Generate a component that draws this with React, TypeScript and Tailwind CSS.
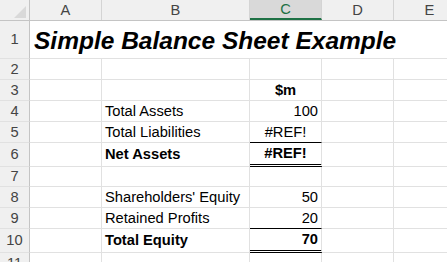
import React from "react";

const cols = ["A", "B", "C", "D", "E"];

type Cell = { text?: string; bold?: boolean; align?: "left" | "right" | "center"; border?: "thin" | "double" };
type Row = { n: number; h: string; title?: boolean; b?: Cell; c?: Cell };

const rows: Row[] = [
  { n: 1, h: "h-[38px]", title: true },
  { n: 2, h: "h-[21px]" },
  { n: 3, h: "h-[21px]", c: { text: "$m", bold: true, align: "center" } },
  { n: 4, h: "h-[21px]", b: { text: "Total Assets" }, c: { text: "100", align: "right" } },
  { n: 5, h: "h-[21px]", b: { text: "Total Liabilities" }, c: { text: "#REF!", align: "center", border: "thin" } },
  { n: 6, h: "h-[24px]", b: { text: "Net Assets", bold: true }, c: { text: "#REF!", bold: true, align: "center", border: "double" } },
  { n: 7, h: "h-[20px]" },
  { n: 8, h: "h-[21px]", b: { text: "Shareholders' Equity" }, c: { text: "50", align: "right" } },
  { n: 9, h: "h-[21px]", b: { text: "Retained Profits" }, c: { text: "20", align: "right", border: "thin" } },
  { n: 10, h: "h-[24px]", b: { text: "Total Equity", bold: true }, c: { text: "70", bold: true, align: "right", border: "double" } },
  { n: 11, h: "h-[21px]" },
];

function DataCell({ cell, w }: { cell?: Cell; w: string }) {
  const align = cell?.align === "right" ? "justify-end pr-[3px]" : cell?.align === "center" ? "justify-center" : "justify-start pl-[3px]";
  const border =
    cell?.border === "thin"
      ? "border-b border-b-black"
      : cell?.border === "double"
      ? "border-b-[3px] border-double border-b-black"
      : "border-b border-b-[#e1e1e1]";
  return (
    <div className={`${w} shrink-0 flex items-center ${align} border-r border-r-[#e1e1e1] ${border} ${cell?.bold ? "font-bold" : ""}`}>
      {cell?.text}
    </div>
  );
}

export default function App() {
  return (
    <div className="w-[447px] h-[262px] overflow-hidden bg-white text-[14.7px] leading-none text-black" style={{ fontFamily: '"Liberation Sans", Arial, sans-serif' }}>
      {/* column headers */}
      <div className="flex h-[21px] bg-[#f0f0f0] border-b border-b-[#c4c4c4]">
        <div className="w-[30px] shrink-0 border-r border-r-[#c4c4c4] flex items-end justify-end pr-[3px] pb-[2px]">
          <svg width="12" height="12" viewBox="0 0 12 12">
            <polygon points="0,12 12,12 12,0" fill="#d9d9d9" />
          </svg>
        </div>
        {cols.map((c) => (
          <div
            key={c}
            className={`${c === "B" ? "w-[148px]" : "w-[72px]"} shrink-0 flex items-center justify-center border-r border-r-[#d4d4d4] ${
              c === "C" ? "bg-[#d9d9d9] text-[#1e7145] border-b-2 border-b-[#1e7145]" : "text-[#444]"
            }`}
          >
            {c}
          </div>
        ))}
      </div>

      {rows.map((r) => (
        <div key={r.n} className={`flex ${r.h}`}>
          <div className="w-[30px] shrink-0 bg-[#f0f0f0] border-r border-r-[#c4c4c4] border-b border-b-[#e1e1e1] flex items-center justify-center text-[#444]">
            {r.n}
          </div>
          {r.title ? (
            <div className="w-[436px] shrink-0 border-b border-b-[#e1e1e1] flex items-center pl-[4px] pt-[4px] text-[24.5px] font-bold italic whitespace-nowrap">
              Simple Balance Sheet Example
            </div>
          ) : (
            <>
              <DataCell w="w-[72px]" />
              <DataCell w="w-[148px]" cell={r.b} />
              <DataCell w="w-[72px]" cell={r.c} />
              <DataCell w="w-[72px]" />
              <DataCell w="w-[72px]" />
            </>
          )}
        </div>
      ))}
    </div>
  );
}
